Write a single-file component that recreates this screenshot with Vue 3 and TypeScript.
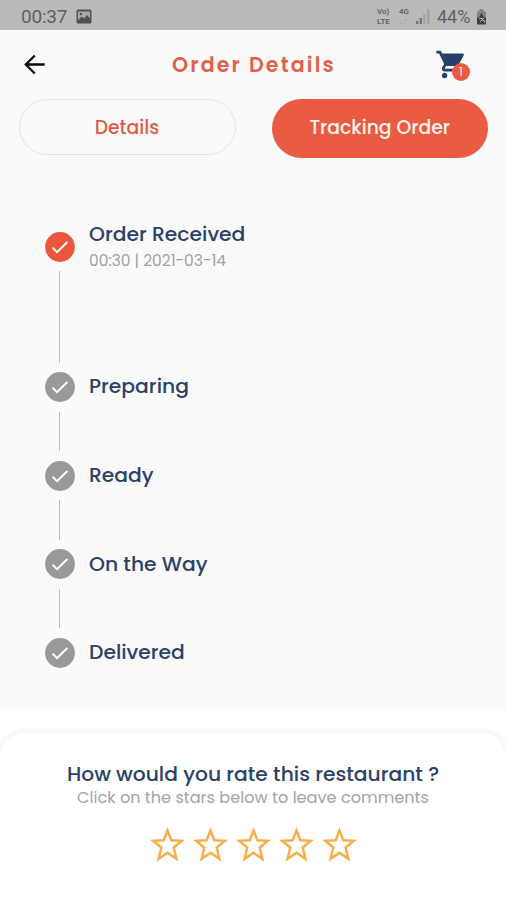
<script setup lang="ts">
interface Step {
  label: string
  time?: string
  done: boolean
}

const steps: Step[] = [
  { label: 'Order Received', time: '00:30 | 2021-03-14', done: true },
  { label: 'Preparing', done: false },
  { label: 'Ready', done: false },
  { label: 'On the Way', done: false },
  { label: 'Delivered', done: false },
]
const stars: number[] = [1, 2, 3, 4, 5]
</script>

<template>
  <div class="screen">
    <div class="status">
      <span class="clock">00:37</span>
      <svg class="picture" width="16" height="15" viewBox="0 0 16 15">
        <rect x="0.5" y="0.5" width="15" height="14" rx="1.5" fill="#505050" />
        <path d="M2 11.5V2.5h12v7l-3-3.5-3 3.5-2.5-2z" fill="#a8a8a8" />
        <circle cx="5" cy="5" r="1.2" fill="#505050" />
      </svg>
      <div class="status-right">
        <div class="net volte"><span>Vo)</span><span>LTE</span></div>
        <div class="net fourg"><span>4G</span><span class="arrows">↓↑</span></div>
        <svg class="signal" width="14" height="15" viewBox="0 0 14 15">
          <path d="M0 12h2.4v3H0zM3.6 9H6v6H3.6z" fill="#757575" />
          <path d="M7.2 5h2.4v10H7.2zM11 0h2.6v15H11z" fill="#a3a3a3" />
        </svg>
        <span class="percent">44%</span>
        <svg class="battery" width="11" height="16" viewBox="0 0 11 16">
          <path d="M3.5 0h4v2H9l1 1.500V15H1V3.500L2 2h1.500z" fill="#858585" />
          <path d="M1 8.500h2l2.500-5 2.500 5h2v7H1z" fill="#404040" />
          <path d="M3 9.500h4.500L4 13M6.500 11.500h2v2" stroke="#b5b5b5" stroke-width="1" fill="none" />
        </svg>
      </div>
    </div>

    <header class="header">
      <svg class="back" width="22" height="22" viewBox="0 0 22 22">
        <path d="M20.700 10.500H2.500M10.800 1.500L1.800 10.500l9 9" fill="none" stroke="#0a0a0a" stroke-width="2.300" />
      </svg>
      <h1>Order Details</h1>
      <div class="cart">
        <svg width="33" height="33" viewBox="0 0 24 24">
          <path
            fill="#26406a"
            d="M7 18c-1.100 0-1.990.9-1.990 2S5.900 22 7 22s2-.9 2-2-.9-2-2-2zM1 2v2h2l3.600 7.590-1.350 2.450c-.16.280-.25.610-.25.960 0 1.100.9 2 2 2h12v-2H7.420c-.14 0-.25-.11-.25-.25l.03-.12.900-1.630h7.450c.75 0 1.410-.41 1.750-1.030l3.580-6.490c.08-.14.120-.31.120-.48 0-.55-.45-1-1-1H5.210l-.94-2H1zm16 16c-1.100 0-1.990.9-1.990 2s.89 2 1.990 2 2-.9 2-2-.9-2-2-2z"
          />
        </svg>
        <span class="badge">1</span>
      </div>
    </header>

    <nav class="tabs">
      <button class="tab outline">Details</button>
      <button class="tab filled">Tracking Order</button>
    </nav>

    <main class="timeline">
      <div v-for="(step, i) in steps" :key="step.label" class="step" :class="{ done: step.done }">
        <div class="rail">
          <svg class="dot" width="30" height="30" viewBox="0 0 30 30">
            <circle class="disc" cx="15" cy="15" r="14.900" />
            <path d="M7.500 15.600l4.500 4.500L22.400 10" fill="none" stroke="#fff" stroke-width="2" />
          </svg>
          <i v-if="i < steps.length - 1" class="line"></i>
        </div>
        <div class="text">
          <div class="label">{{ step.label }}</div>
          <div v-if="step.time" class="time">{{ step.time }}</div>
        </div>
      </div>
    </main>

    <section class="footer">
      <div class="sheet">
        <h2>How would you rate this restaurant ?</h2>
        <p>Click on the stars below to leave comments</p>
        <div class="stars">
          <svg v-for="n in stars" :key="n" width="43" height="40" viewBox="0 0 43 40">
            <path
              d="M21.500 5.400L25.300 15.200L35.800 15.800L27.700 22.500L30.400 33.800L21.500 27.800L12.600 33.800L15.300 22.500L7.200 15.800L17.700 15.200Z"
              fill="none"
              stroke="#f9ad4b"
              stroke-width="2.500"
            />
          </svg>
        </div>
      </div>
    </section>
  </div>
</template>

<style>
body {
  background: #fff;
}
</style>

<style scoped>
.screen {
  width: 506px;
  height: 900px;
  display: flex;
  flex-direction: column;
  overflow: hidden;
  background: #fafafa;
  font-family: Poppins, Inter, sans-serif;
  color: #2b4167;
}
.status {
  height: 30px;
  flex: none;
  box-sizing: border-box;
  display: flex;
  align-items: center;
  padding: 3px 19px 0 21px;
  background: #bababa;
  color: #606060;
  font-family: Roboto, sans-serif;
  font-size: 19px;
}
.clock {
  width: 47px;
  letter-spacing: -0.2px;
}
.picture {
  margin-left: 8px;
}
.status-right {
  margin-left: auto;
  display: flex;
  align-items: center;
}
.net {
  display: flex;
  flex-direction: column;
  font-size: 8px;
  line-height: 10px;
  font-weight: 600;
}
.volte {
  width: 22px;
}
.fourg {
  width: 17px;
}
.arrows {
  color: #929292;
}
.signal {
  margin-right: 7px;
}
.percent {
  font-size: 18px;
  width: 34px;
}
.battery {
  margin-left: 5px;
}
.header {
  height: 69px;
  flex: none;
  display: flex;
  align-items: center;
  padding: 0 35px 0 24px;
}
.back {
  width: 22px;
}
h1 {
  margin: 0 0 0 126px;
  width: 170px;
  white-space: nowrap;
  font-size: 20.500px;
  font-weight: 600;
  line-height: 30px;
  letter-spacing: 2.150px;
  color: #e2604a;
}
.cart {
  position: relative;
  margin-left: auto;
  width: 36px;
  height: 33px;
}
.badge {
  position: absolute;
  left: 17px;
  top: 15px;
  width: 18px;
  height: 18px;
  border-radius: 50%;
  background: #ee5a40;
  color: #fff;
  font-size: 12px;
  line-height: 17px;
  text-align: center;
}
.tabs {
  flex: none;
  display: flex;
  align-items: flex-start;
  justify-content: space-between;
  height: 59px;
  padding: 0 18px 0 18.500px;
}
.tab {
  width: 217px;
  box-sizing: border-box;
  padding: 0;
  font-family: inherit;
  font-size: 18.800px;
  font-weight: 500;
  border-radius: 30px;
}
.outline {
  height: 56px;
  border: 1px solid #f8dcd8;
  background: #fafafa;
  color: #dd5d46;
}
.filled {
  width: 216.500px;
  height: 58.500px;
  padding-bottom: 1.500px;
  border: 0;
  background: #e95c42;
  color: #fff2ee;
}
.timeline {
  flex: none;
  height: 553px;
  box-sizing: border-box;
  padding: 73.500px 44.500px 0;
}
.step {
  display: flex;
  gap: 14.500px;
  height: 88.670px;
}
.step.done {
  height: 140.500px;
}
.rail {
  width: 30px;
  display: flex;
  flex-direction: column;
  align-items: center;
}
.dot {
  flex: none;
  display: block;
}
.disc {
  fill: #999;
}
.done .disc {
  fill: #ea573d;
}
.line {
  flex: 1;
  width: 1.500px;
  margin: 9.500px 0;
  background: #bebebe;
}
.text {
  margin-top: -0.700px;
}
.label {
  height: 30px;
  line-height: 30px;
  font-size: 20.300px;
  font-weight: 500;
  white-space: nowrap;
}
.done .text {
  margin-top: -12.700px;
}
.time {
  margin-top: -1.300px;
  font-size: 15.450px;
  line-height: 26px;
  color: #a0a0a4;
}
.footer {
  flex: 1;
  padding-top: 22px;
  background: #fff;
}
.sheet {
  height: 100%;
  display: flex;
  flex-direction: column;
  align-items: center;
  border-radius: 26px 26px 0 0;
  background: #fff;
  box-shadow: 0 0 1px 5px #f8f8f8;
}
h2 {
  margin: 26px 0 0;
  font-size: 20.250px;
  line-height: 30px;
  font-weight: 500;
  white-space: nowrap;
}
p {
  margin: -2px 0 0;
  font-size: 16.150px;
  line-height: 22px;
  color: #a3a3a7;
  white-space: nowrap;
}
.stars {
  display: flex;
  margin-top: 16px;
}
</style>
